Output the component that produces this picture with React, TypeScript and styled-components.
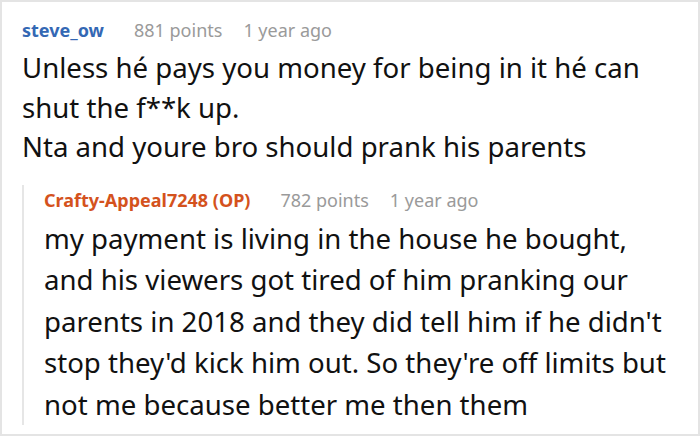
import React from 'react';
import styled, { createGlobalStyle } from 'styled-components';

const Global = createGlobalStyle`
  html, body { margin: 0; padding: 0; background: #fff; }
  body { font-family: "Noto Sans", "Open Sans", sans-serif; }
`;

const Frame = styled.div`
  width: 700px;
  height: 436px;
  box-sizing: border-box;
  border: 2px solid #e4e4e4;
  padding: 13px 20px 0 20px;
  overflow: hidden;
`;

const Header = styled.div`
  display: flex;
  align-items: baseline;
  gap: 30px;
  font-size: 18px;
  line-height: 30px;
`;

const Author = styled.span<{ $op?: boolean }>`
  font-weight: 700;
  color: ${p => (p.$op ? '#d4521d' : '#3468b4')};
`;

const Meta = styled.span`
  color: #9a9a9a;
`;

const MetaGroup = styled.span`
  display: flex;
  gap: 21px;
`;

const Body = styled.div<{ $lh: number }>`
  color: #111;
  font-size: 27.6px;
  line-height: ${p => p.$lh}px;
  margin-top: 3px;
`;

const Reply = styled.div`
  margin-top: 33px;
  border-left: 2px solid #e6e6e6;
  padding-left: 20px;

  & > div {
    margin-top: -15px;
    margin-bottom: -7px;
  }
`;

type CommentProps = {
  author: string;
  op?: boolean;
  points: string;
  age: string;
  lineHeight: number;
  lines: string[];
};

const Comment: React.FC<CommentProps> = ({ author, op, points, age, lineHeight, lines }) => (
  <div>
    <Header>
      <Author $op={op}>{author}</Author>
      <MetaGroup>
        <Meta>{points}</Meta>
        <Meta>{age}</Meta>
      </MetaGroup>
    </Header>
    <Body $lh={lineHeight}>
      {lines.map(l => (
        <div key={l}>{l}</div>
      ))}
    </Body>
  </div>
);

export default function App() {
  return (
    <>
      <Global />
      <Frame>
        <Comment
          author="steve_ow"
          points="881 points"
          age="1 year ago"
          lineHeight={39.5}
          lines={[
            'Unless hé pays you money for being in it hé can',
            'shut the f**k up.',
            'Nta and youre bro should prank his parents',
          ]}
        />
        <Reply>
          <Comment
            author="Crafty-Appeal7248 (OP)"
            op
            points="782 points"
            age="1 year ago"
            lineHeight={41.5}
            lines={[
              'my payment is living in the house he bought,',
              'and his viewers got tired of him pranking our',
              "parents in 2018 and they did tell him if he didn't",
              "stop they'd kick him out. So they're off limits but",
              'not me because better me then them',
            ]}
          />
        </Reply>
      </Frame>
    </>
  );
}
